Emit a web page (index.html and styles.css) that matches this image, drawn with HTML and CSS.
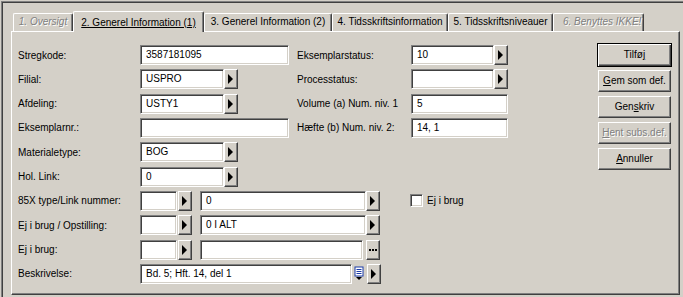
FILE: index.html
```html
<!DOCTYPE html>
<html lang="da">
<head>
    <meta charset="UTF-8">
    <link rel="stylesheet" href="styles.css">
    <title>Eksemplar</title>
</head>
<body>
<div class="window">
    <div class="tabs">
        <div class="tab tab-1 off">1. Oversigt</div>
        <div class="tab tab-2 active"><u>2. Generel Information (1)</u></div>
        <div class="tab tab-3">3. Generel Information (2)</div>
        <div class="tab tab-4">4. Tidsskriftsinformation</div>
        <div class="tab tab-5">5. Tidsskriftsniveauer</div>
        <div class="tab tab-6 off">6. Benyttes IKKE!</div>
    </div>
    <div class="panel">
        <div class="form">
            <div class="row">
                <span class="lbl">Stregkode:</span>
                <div class="fld fld-long">3587181095</div>
                <span class="lbl2">Eksemplarstatus:</span>
                <div class="fld fld-status">10</div>
                <div class="pick"></div>
            </div>
            <div class="row">
                <span class="lbl">Filial:</span>
                <div class="fld fld-code">USPRO</div>
                <div class="pick"></div>
                <span class="lbl2 after-pick">Processtatus:</span>
                <div class="fld fld-status"></div>
                <div class="pick"></div>
            </div>
            <div class="row">
                <span class="lbl">Afdeling:</span>
                <div class="fld fld-code">USTY1</div>
                <div class="pick"></div>
                <span class="lbl2 after-pick">Volume (a) Num. niv. 1</span>
                <div class="fld fld-num">5</div>
            </div>
            <div class="row">
                <span class="lbl">Eksemplarnr.:</span>
                <div class="fld fld-long"></div>
                <span class="lbl2">Hæfte (b) Num. niv. 2:</span>
                <div class="fld fld-num">14, 1</div>
            </div>
            <div class="row">
                <span class="lbl">Materialetype:</span>
                <div class="fld fld-code">BOG</div>
                <div class="pick"></div>
            </div>
            <div class="row">
                <span class="lbl">Hol. Link:</span>
                <div class="fld fld-code">0</div>
                <div class="pick"></div>
            </div>
            <div class="row">
                <span class="lbl">85X type/Link nummer:</span>
                <div class="fld fld-tiny"></div>
                <div class="pick pick-gap"></div>
                <div class="fld fld-wide">0</div>
                <div class="pick"></div>
                <span class="check"></span>
                <span class="check-lbl">Ej i brug</span>
            </div>
            <div class="row">
                <span class="lbl">Ej i brug / Opstilling:</span>
                <div class="fld fld-tiny"></div>
                <div class="pick pick-gap"></div>
                <div class="fld fld-wide">0 I ALT</div>
                <div class="pick"></div>
            </div>
            <div class="row">
                <span class="lbl">Ej i brug:</span>
                <div class="fld fld-tiny"></div>
                <div class="pick pick-gap"></div>
                <div class="fld fld-wide-dots"></div>
                <div class="dots"></div>
            </div>
            <div class="row">
                <span class="lbl">Beskrivelse:</span>
                <div class="fld fld-desc">Bd. 5; Hft. 14, del 1</div>
                <div class="list-btn">
                    <svg width="12" height="18" viewBox="0 0 12 18">
                        <rect x="2" y="2" width="8" height="9" fill="#fff" stroke="#1c3ca8" stroke-width="1"/>
                        <line x1="3.5" y1="4.5" x2="8.5" y2="4.5" stroke="#1c3ca8"/>
                        <line x1="3.5" y1="6.5" x2="8.5" y2="6.5" stroke="#1c3ca8"/>
                        <line x1="3.5" y1="8.5" x2="8.5" y2="8.5" stroke="#1c3ca8"/>
                        <polygon points="3,12 9,12 6,15" fill="#000"/>
                    </svg>
                </div>
                <div class="pick pick-desc"></div>
            </div>
        </div>
        <div class="actions">
            <div class="btn btn-default">Tilfø<u>j</u></div>
            <div class="btn"><u>G</u>em som def.</div>
            <div class="btn">Gen<u>s</u>kriv</div>
            <div class="btn disabled"><u>H</u>ent subs.def.</div>
            <div class="btn"><u>A</u>nnuller</div>
        </div>
    </div>
</div>
</body>
</html>
```
FILE: styles.css
```css
body {
    margin: 0;
    background-color: #d4d0c8;
    font-family: "Liberation Sans", Arial, sans-serif;
    font-size: 10px;
    color: #000;
    overflow: hidden;
}

.window {
    margin: 1px 0 0 1px;
    height: 296px;
    box-sizing: border-box;
    border-top: 1px solid #808080;
    border-left: 1px solid #808080;
    box-shadow: inset 1px 1px 0 #404040;
    padding: 9px 0 0 9px;
}

/* tabs */
.tabs {
    display: flex;
    align-items: flex-end;
    height: 20px;
    padding-left: 2px;
}

.tab {
    height: 18px;
    box-sizing: border-box;
    border-top: 1px solid #fff;
    border-left: 1px solid #fff;
    border-right: 1px solid #404040;
    box-shadow: inset -1px 0 0 #808080;
    border-radius: 2px 2px 0 0;
    line-height: 16px;
    text-align: center;
    white-space: nowrap;
    overflow: hidden;
}

.tab.active {
    height: 21px;
    margin-bottom: -1px;
    padding-top: 3px;
    background-color: #d4d0c8;
    position: relative;
    z-index: 1;
}

.tab.off {
    color: #808080;
    font-style: italic;
    text-shadow: 1px 1px 0 #fff;
}

.tab-1 { width: 60px; }
.tab-2 { width: 131px; }
.tab-3 { width: 128px; }
.tab-4 { width: 116px; }
.tab-5 { width: 105px; }
.tab-6 { width: 91px; text-align: left; padding-left: 9px; }

/* panel */
.panel {
    width: 669px;
    height: 264px;
    box-sizing: border-box;
    border-top: 1px solid #fff;
    border-left: 1px solid #fff;
    border-right: 1px solid #404040;
    border-bottom: 1px solid #404040;
    box-shadow: inset -1px -1px 0 #808080;
    display: flex;
    padding: 13px 0 0 6px;
}

.form {
    width: 579px;
    display: flex;
    flex-direction: column;
    gap: 4.33px;
}

.row {
    display: flex;
    align-items: center;
    height: 20px;
}

.lbl {
    width: 122px;
}

.lbl2 {
    width: 114px;
    margin-left: 8px;
}

.lbl2.after-pick {
    margin-left: 59px;
}

.fld {
    height: 20px;
    box-sizing: border-box;
    background-color: #fff;
    border: 1px solid;
    border-color: #808080 #fff #fff #808080;
    box-shadow: inset 1px 1px 0 #404040, inset -1px -1px 0 #d4d0c8;
    padding-left: 5px;
    line-height: 18px;
    white-space: nowrap;
}

.fld-long { width: 149px; }
.fld-code { width: 84px; }
.fld-status { width: 83px; }
.fld-num { width: 97px; }
.fld-tiny { width: 37px; }
.fld-wide { width: 166px; }
.fld-wide-dots { width: 163px; }
.fld-desc { width: 212px; }

.pick,
.dots,
.btn {
    box-sizing: border-box;
    border: 1px solid;
    border-color: #fff #404040 #404040 #fff;
    box-shadow: inset -1px -1px 0 #808080;
    background-color: #d4d0c8;
}

.pick {
    width: 14px;
    height: 20px;
    display: flex;
    align-items: center;
    justify-content: center;
}

.pick::before {
    content: "";
    border-left: 5px solid #000;
    border-top: 5px solid transparent;
    border-bottom: 5px solid transparent;
    margin-left: -1px;
}

.fld-tiny + .pick {
    margin-left: 1px;
}

.pick-gap {
    margin-right: 8px;
}

.pick-desc {
    margin-left: 2px;
}

.dots {
    width: 14px;
    height: 20px;
    margin-left: 3px;
    display: flex;
    align-items: center;
    padding-left: 2px;
}

.dots::before {
    content: "";
    width: 2px;
    height: 2px;
    margin-top: 1px;
    background-color: #000;
    box-shadow: 3px 0 0 #000, 6px 0 0 #000;
}

.list-btn {
    width: 12px;
    height: 18px;
    margin-left: 1px;
}

.list-btn svg {
    display: block;
}

.check {
    width: 13px;
    height: 13px;
    box-sizing: border-box;
    margin-left: 30px;
    background-color: #fff;
    border: 1px solid;
    border-color: #808080 #fff #fff #808080;
    box-shadow: inset 1px 1px 0 #404040, inset -1px -1px 0 #d4d0c8;
}

.check-lbl {
    margin-left: 4px;
}

/* buttons */
.actions {
    margin-top: -2px;
    width: 75px;
    display: flex;
    flex-direction: column;
}

.btn {
    width: 73px;
    height: 22px;
    margin: 0 1px 4px;
    text-align: center;
    line-height: 20px;
}

.btn-default {
    width: 75px;
    height: 24px;
    margin: 0 0 3px;
    border: 1px solid #000;
    box-shadow: inset 1px 1px 0 #fff, inset -1px -1px 0 #404040, inset -2px -2px 0 #808080;
    line-height: 22px;
}

.btn.disabled {
    color: #808080;
    text-shadow: 1px 1px 0 #fff;
}
```
